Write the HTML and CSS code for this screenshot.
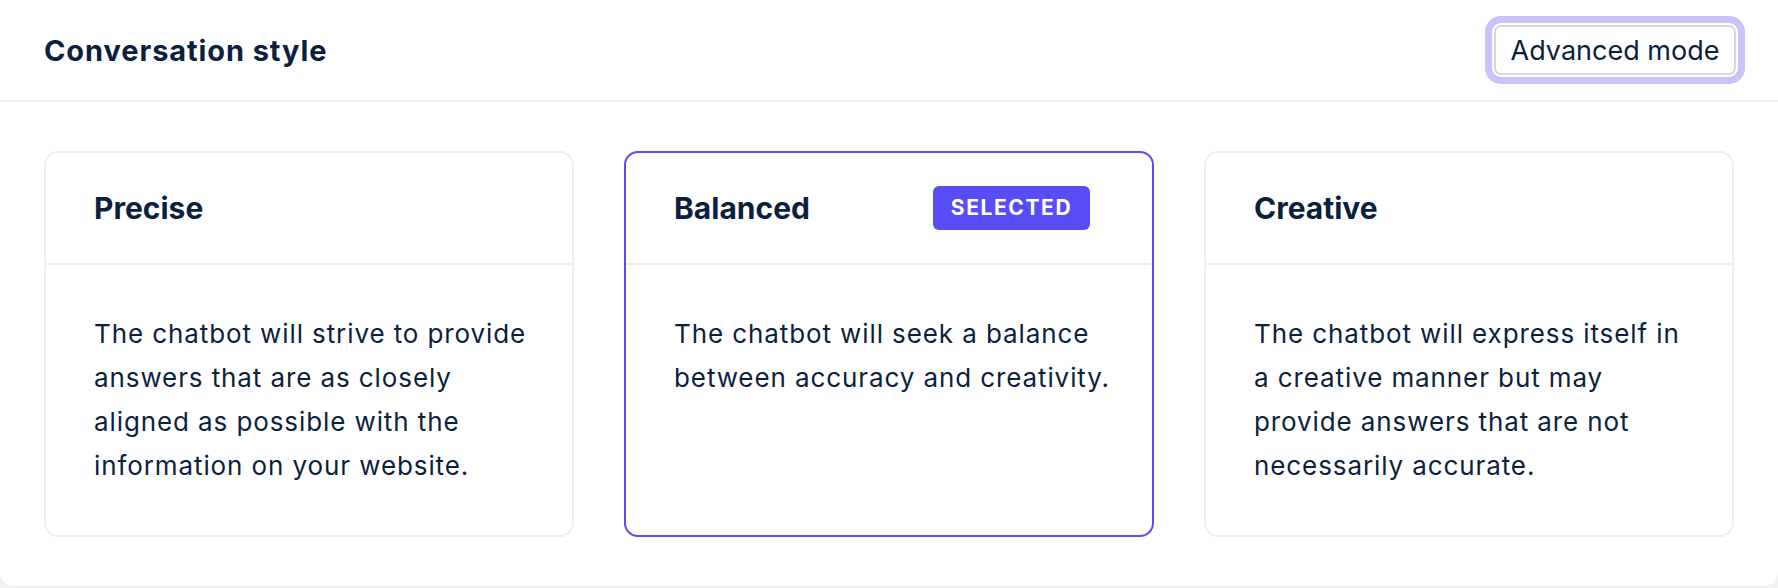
FILE: index.html
```html
<!DOCTYPE html>
<html lang="en">
<head>
  <meta charset="UTF-8" />
  <title>Conversation style</title>
  <link rel="stylesheet" href="styles.css">
</head>
<body>

<div class="panel">
  <div class="panel-head">
    <h2 class="panel-title">Conversation style</h2>
    <button class="mode-btn">Advanced mode</button>
  </div>

  <div class="cards">
    <div class="card">
      <div class="card-head">
        <h3>Precise</h3>
      </div>
      <p class="card-body">The chatbot will strive to provide answers that are as closely aligned as possible with the information on your website.</p>
    </div>

    <div class="card selected">
      <div class="card-head">
        <h3>Balanced</h3>
        <span class="badge">SELECTED</span>
      </div>
      <p class="card-body">The chatbot will seek a balance between accuracy and creativity.</p>
    </div>

    <div class="card">
      <div class="card-head">
        <h3>Creative</h3>
      </div>
      <p class="card-body">The chatbot will express itself in a creative manner but may provide answers that are not necessarily accurate.</p>
    </div>
  </div>
</div>

</body>
</html>
```

FILE: styles.css
```css
html, body {
  margin: 0;
  padding: 0;
  background: #f1f1f2;
  font-family: Inter, "Liberation Sans", sans-serif;
  color: #0c1f3d;
}

.panel {
  background: #fff;
  border-radius: 0 0 14px 14px;
  padding-bottom: 49px;
}

.panel-head {
  height: 100px;
  display: flex;
  align-items: center;
  justify-content: space-between;
  padding: 0 42px 0 44px;
  border-bottom: 2px solid #efeff0;
}

.panel-title {
  margin: 0;
  font-size: 29px;
  font-weight: 700;
  letter-spacing: 0.9px;
}

.mode-btn {
  height: 50px;
  width: 242px;
  background: #fff;
  border: 2px solid #d8d8da;
  border-radius: 7px;
  font-family: inherit;
  font-size: 27px;
  color: #0c1f3d;
  box-shadow: 0 0 0 2px #fff, 0 0 0 9px #cac3f8;
  cursor: pointer;
}

.cards {
  display: grid;
  grid-template-columns: repeat(3, 1fr);
  gap: 50px;
  padding: 49px 44px 0;
}

.card {
  border: 2px solid #efeff0;
  border-radius: 14px;
}

.card.selected {
  border-color: #584df4;
}

.card-head {
  height: 110px;
  display: flex;
  align-items: center;
  justify-content: space-between;
  padding: 0 62px 0 48px;
  border-bottom: 2px solid #efeff0;
}

.card-head h3 {
  margin: 0;
  font-size: 30px;
  font-weight: 700;
}

.badge {
  background: #574cf5;
  color: #fff;
  font-size: 21px;
  font-weight: 700;
  letter-spacing: 1.6px;
  width: 157px;
  height: 44px;
  line-height: 44px;
  text-align: center;
  border-radius: 6px;
}

.card-body {
  margin: 0;
  padding: 47px 36px 47px 48px;
  font-size: 26px;
  letter-spacing: 0.9px;
  line-height: 44px;
}
```
